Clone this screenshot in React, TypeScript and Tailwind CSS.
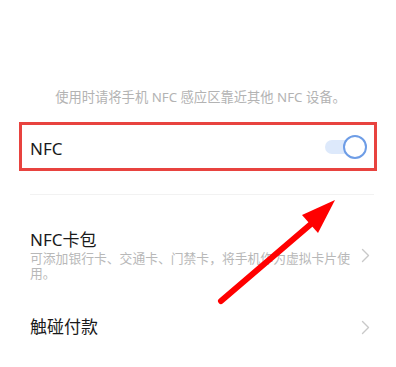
import React from "react";

function Chevron() {
  return (
    <svg width="9" height="15" viewBox="0 0 9 15" fill="none">
      <path d="M1.5 1.5 L7.5 7.5 L1.5 13.5" stroke="#c9c9c9" strokeWidth="1.4" strokeLinecap="round" strokeLinejoin="round" />
    </svg>
  );
}

export default function App() {
  return (
    <div className="relative w-[396px] h-[367px] overflow-hidden bg-white font-['Noto_Sans','Noto_Sans_CJK_SC',sans-serif]">
      <p className="pt-[88px] pl-[5px] text-center text-[13.3px] leading-[18px] text-[#b3b3b3]">
        使用时请将手机 NFC 感应区靠近其他 NFC 设备。
      </p>

      <div className="mt-[16px] mx-[19px] h-[49px] border-[3px] border-[#e8433f] flex items-center justify-between pl-[8px] pr-[7px]">
        <span className="text-[17px] leading-[22px] text-[#1a1a1a] translate-y-[2px]">NFC</span>
        <div className="relative w-[42px] h-[24px] flex items-center">
          <div className="absolute left-0 right-[4px] h-[14px] rounded-full bg-[#dde9fb]" />
          <div className="absolute right-0 w-[24px] h-[24px] rounded-full bg-white border-[2.5px] border-[#6e9de6]" />
        </div>
      </div>

      <div className="mt-[23px] ml-[30px] mr-[22px] h-px bg-[#f2f2f2]" />

      <div className="mt-[34px] pl-[30px] pr-[26px] flex items-center justify-between">
        <div>
          <div className="text-[17px] leading-[22px] text-[#1a1a1a]">NFC卡包</div>
          <div className="w-[326px] text-[12.8px] leading-[15px] text-[#b8b8b8]">
            可添加银行卡、交通卡、门禁卡，将手机作为虚拟卡片使用。
          </div>
        </div>
        <Chevron />
      </div>

      <div className="mt-[35px] pl-[30px] pr-[26px] flex items-center justify-between">
        <span className="text-[17px] leading-[22px] text-[#1a1a1a]">触碰付款</span>
        <Chevron />
      </div>

      <svg className="absolute inset-0 pointer-events-none" width="396" height="367" viewBox="0 0 396 367">
        <line x1="221" y1="301" x2="318" y2="218" stroke="#ff0000" strokeWidth="6" strokeLinecap="round" />
        <polygon points="335,200 302,215 318,233" fill="#ff0000" />
      </svg>
    </div>
  );
}
